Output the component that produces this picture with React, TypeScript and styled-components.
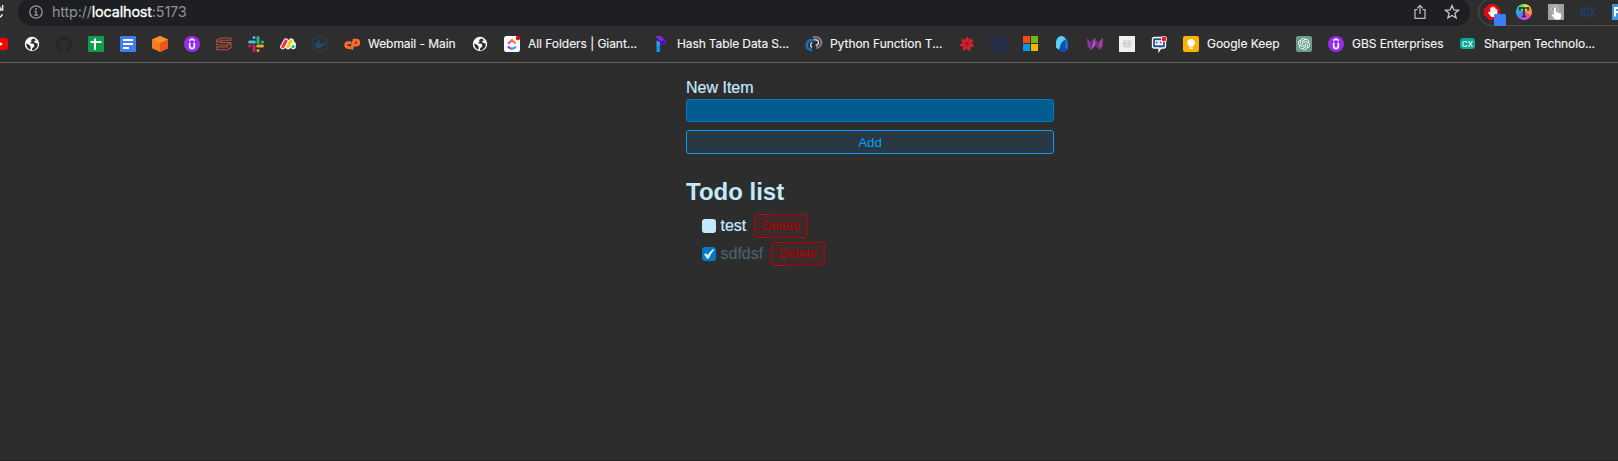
import React from "react";
import styled, { createGlobalStyle } from "styled-components";
import { SiOpenai } from "react-icons/si";
import { FaGithub, FaHandPaper } from "react-icons/fa";

const GlobalStyle = createGlobalStyle`
  * { box-sizing: border-box; }
  html, body { margin: 0; background: #2d2d2d; overflow: hidden; }
  body { font-family: "Liberation Sans", Arial, sans-serif; color: #c2eaff; }
`;

const Window = styled.div`
  width: 1618px;
  height: 461px;
  overflow: hidden;
  background: #2d2d2d;
  border-bottom: 1px solid #241f21;
`;

const Toolbar = styled.header`
  height: 26px;
  display: flex;
  background: #2e2e2f;
  overflow: hidden;
`;

const ReloadSlot = styled.div`
  width: 18px;
  flex: none;
  svg { display: block; }
`;

const AddressBar = styled.div`
  width: 1452px;
  height: 28px;
  margin-top: -2px;
  flex: none;
  display: flex;
  align-items: center;
  padding: 0 10px 0 11px;
  border-radius: 14px;
  background: #1e1f23;
  font: 14.4px Inter, Roboto, sans-serif;
  color: #919396;
`;

const Url = styled.span`
  margin: -1px 0 0 9px;
  flex: 1;
  letter-spacing: -0.16px;
  b { font-weight: 400; color: #fff; -webkit-text-stroke: 0.3px #fff; }
`;

const AddressActions = styled.div`
  display: flex;
  gap: 16px;
`;

const Extensions = styled.div`
  width: 170px;
  height: 28px;
  flex: none;
  margin: -2px 0 0 8px;
  padding: 5px 0 0 5px;
  display: flex;
  gap: 16px;
  border: 1px solid #4d4e50;
  border-radius: 14px;
  svg { flex: none; overflow: visible; }
`;

const BookmarkBar = styled.nav`
  height: 37px;
  display: flex;
  gap: 16px;
  padding-top: 10px;
  background: #2e2e2f;
  border-bottom: 1px solid #5c5c5d;
  overflow: hidden;
`;

const Bookmark = styled.a<{ $width?: number }>`
  width: ${(p) => p.$width ?? 16}px;
  height: 16px;
  flex: none;
  display: flex;
  gap: 8px;
  align-items: center;
  &:first-child { margin-left: -8px; }
  svg { flex: none; display: block; overflow: visible; }
`;

const Label = styled.span<{ $track: number }>`
  font: 12px/16px Inter, Roboto, sans-serif;
  letter-spacing: ${(p) => p.$track}px;
  white-space: nowrap;
  color: #f4f4f4;
  -webkit-text-stroke: 0.15px #f4f4f4;
`;

const Page = styled.main`
  width: 368px;
  margin-left: 686px;
  padding-top: 16px;
  display: flex;
  flex-direction: column;
`;

const ItemForm = styled.form`
  display: flex;
  flex-direction: column;
  label { height: 18px; line-height: 18px; font-size: 16px; margin-bottom: 2px; -webkit-text-stroke: 0.2px #c2eaff; }
`;

const TextField = styled.input`
  height: 23px;
  margin: 0 0 8px;
  border: 1px solid #007ac2;
  border-radius: 3px;
  background: #005c91;
  outline: none;
`;

const Button = styled.button<{ $danger?: boolean }>`
  height: 24px;
  padding: ${(p) => (p.$danger ? "0 7px" : "1px 7px 0")};
  border: 1px solid ${(p) => (p.$danger ? "#b80000" : "#0a99f5")};
  border-radius: 3px;
  background: ${(p) => (p.$danger ? "#3d282a" : "#293944")};
  color: ${(p) => (p.$danger ? "#b30000" : "#0a99f5")};
  font: 13.333px/20px "Liberation Sans", Arial, sans-serif;
`;

const Heading = styled.h1`
  margin: 24px 0 0;
  font-size: 24px;
  line-height: 28px;
`;

const List = styled.ul`
  list-style: none;
  margin: 8px 0 0;
  padding: 0 0 0 16px;
  display: flex;
  flex-direction: column;
  gap: 4px;
`;

const Todo = styled.li<{ $done?: boolean }>`
  display: flex;
  align-items: center;
  height: 24px;
  span {
    margin: 0 7.5px 0 4.5px;
    line-height: 18px;
    color: ${(p) => (p.$done ? "#4b606b" : "#c2eaff")};
    -webkit-text-stroke: 0.2px ${(p) => (p.$done ? "#4b606b" : "#c2eaff")};
  }
`;

const CheckBox = styled.div<{ $done?: boolean }>`
  width: 14px;
  height: 14px;
  border-radius: 3px;
  background: ${(p) => (p.$done ? "#007ac2" : "#c2eaff")};
  svg { display: block; }
`;

const Globe = () => (
  <svg width="16" height="16"><circle cx="8" cy="8" r="7.2" fill="#fff" /><path d="M9.5 2.3L7 4.3l.6 1.5-2 1.4 4 .6.8 2.4-2.4 2.2-.2 2.2 2.600-.6 3-3 .5-3.500-2.400-.5-1.800-1.600 2.400-1.200z" fill="#2e2e2f" /><path d="M2.200 7.200l3.600 2 1 2.200-.6 2.400q-4-2-4-6.600z" fill="#2e2e2f" /></svg>
);
const YouTube = () => (
  <svg width="16" height="16"><rect y="2" width="16" height="12" rx="3" fill="#f00" /><path d="M6.5 5.4v5.2L11 8z" fill="#fff" /></svg>
);
const Sheets = () => (
  <svg width="16" height="16"><rect width="16" height="16" rx="1" fill="#0f9d4c" /><path d="M2.5 6h11M7 2.5v11.5" stroke="#fff" strokeWidth="2" /></svg>
);
const Docs = () => (
  <svg width="16" height="16"><rect width="16" height="16" rx="1" fill="#3f7df3" /><path d="M3 4h10M3 8h10M3 12h6" stroke="#fff" strokeWidth="1.8" /></svg>
);
const Cube = () => (
  <svg width="16" height="16"><path d="M8 0l8 3.5v8.8L8 16l-8-3.7V3.5z" fill="#f47b20" /><path d="M0 3.5L8 0l8 3.5L8 7z" fill="#ff9226" /><path d="M8 7l8-3.5v8.8L8 16z" fill="#e9581b" /></svg>
);
const Udemy = () => (
  <svg width="16" height="16"><circle cx="8" cy="8" r="8" fill="#962cf0" /><path d="M5.2 4.6L8 3l2.8 1.6M5.7 6.5v3.7a2.3 2.3 0 004.6 0V6.5" fill="none" stroke="#fff" strokeWidth="1.6" /></svg>
);
const SqlKnot = () => (
  <svg width="16" height="16" fill="none" stroke="#b4503d" strokeWidth="1.1"><path d="M15 2H4.500L.8 4v5H11.500v2H.8v2.800H12l3-2.300V6.500H4.800V4.300H15zM.8 4.500L4.800 6.500M11.500 9L15 6.500" /></svg>
);
const Slack = () => (
  <svg width="16" height="16" strokeWidth="3" strokeLinecap="round">
    <path d="M1.6 6h4.8M6 1.5v.1" stroke="#36c5f0" /><path d="M10 1.6v4.8M14.4 6h.1" stroke="#2eb67d" />
    <path d="M9.7 10h4.8M10 14.4v.1" stroke="#e0a92c" /><path d="M6 9.7v4.8M1.6 10h.1" stroke="#d41c58" />
  </svg>
);
const Monday = () => (
  <svg width="16" height="16" strokeLinecap="round"><path d="M2.8 10.8L6 5M8 10.8L11.3 5M13.2 10.6V8" stroke="#fff" strokeWidth="5.2" /><path d="M2.8 10.8L6 5" stroke="#f62b54" strokeWidth="3.2" /><path d="M7.8 10.8L11 5" stroke="#fc0" strokeWidth="3.2" /><circle cx="13.1" cy="10.6" r="1.7" fill="#00ca72" /></svg>
);
const WhaleRound = () => (
  <svg width="16" height="16"><circle cx="8" cy="8" r="7.4" fill="none" stroke="#21435a" strokeWidth="1.1" /><path d="M2.8 8h7.700q.8-1 .3-2.500 1.200.5 1.400 1.700h1.500q-.6 1.500-2.200 1.500Q10 12 6.600 12q-3.600 0-3.800-4zM4 6h4.500v1.500H4zM6.500 4.200H8v1.500H6.500z" fill="#214f70" /></svg>
);
const CPanel = () => (
  <svg width="16" height="16" fill="none" stroke="#ff6c2c" strokeWidth="3"><path d="M7.300 6.700H4.400a2.400 2.400 0 00-.3 4.800h2.500" /><path d="M7.600 13.500L10 4.200h2.300a2.300 2.300 0 010 4.800H10" /></svg>
);
const ClickUp = () => (
  <svg width="16" height="16" fill="none" strokeWidth="2.2">
    <defs>
      <linearGradient id="cuTop"><stop stopColor="#ff35bc" /><stop offset="1" stopColor="#ff9a00" /></linearGradient>
      <linearGradient id="cuLow"><stop stopColor="#7b40f6" /><stop offset="1" stopColor="#29b5ff" /></linearGradient>
    </defs>
    <rect width="16" height="16" rx="2.5" fill="#fff" /><path d="M4.2 7.6L8 4.2l3.8 3.4" stroke="url(#cuTop)" /><path d="M4 10.4q4 4.4 8 0" stroke="url(#cuLow)" /><circle cx="14" cy="2" r="2.2" fill="#e00000" />
  </svg>
);
const Programiz = () => (
  <svg width="16" height="16"><path d="M3 0h4.5l5.2 4.5-1 3.5L3 1.6z" fill="#8422ee" /><path d="M3.5 6.5L11 4l1.5 1.5L9 9.3 3.5 11.5z" fill="#5a00dd" /><path d="M3.5 4.5L7 6v4l-3.500 2z" fill="#15a9df" /><path d="M3.5 12L7 10.5V16H3.500z" fill="#059cf2" /></svg>
);
const PythonRings = () => (
  <svg width="16" height="16" fill="none"><path d="M7 1.2h3a4.8 4.8 0 010 10.6" stroke="#77787b" strokeWidth="2.4" /><path d="M8 3.8h1.7a2.5 2.5 0 010 5.6" stroke="#e2e2e2" strokeWidth="1.3" /><path d="M8 4.2H6a4.800 4.800 0 00-1 9.600l1 1" stroke="#176eb3" strokeWidth="2.8" /><path d="M6 6.5a3 3 0 000 5" stroke="#f1f1f1" strokeWidth="1.2" /></svg>
);
const RedBurst = () => (
  <svg width="16" height="16"><g fill="#dc202c">{[0, 51, 103, 154, 206, 257, 309].map((a) => (<path key={a} transform={`rotate(${a} 8 8)`} d="M8 8L5.6 4 8.500.3 10.200 3.600z" />))}</g><g stroke="#6d2026" strokeWidth=".5">{[0, 51, 103, 154, 206, 257, 309].map((a) => (<path key={a} transform={`rotate(${a} 8 8)`} d="M8 8L10.200 3.600" />))}</g></svg>
);
const HSquare = () => (
  <svg width="16" height="16"><rect width="16" height="16" fill="#262c48" /><path d="M5 3v10M5 8.5q5-4 5.500.5v4" fill="none" stroke="#20304f" strokeWidth="2" /></svg>
);
const Microsoft = () => (
  <svg width="16" height="16"><path d="M0 0h7v7H0z" fill="#f8491c" /><path d="M8 0h7v7H8z" fill="#75b800" /><path d="M0 8h7v7H0z" fill="#0099ec" /><path d="M8 8h7v7H8z" fill="#ffb500" /></svg>
);
const BlueFold = () => (
  <svg width="16" height="16"><path d="M1 11.5V6q1-5.500 5.500-6Q12 .5 13 7v6l-3 2.500H7z" fill="#1675cf" /><path d="M1 11.500V6q1-5.500 5.500-6Q10 .5 10.500 3.500 6 5 5.500 12L3.500 13.500z" fill="#5bd0f7" /><path d="M3.500 14.500Q5 12 5.500 9q1-4 5-4.500L10 12l3 1-3 2.700H6z" fill="#0d51ad" /></svg>
);
const VisualW = () => (
  <svg width="16" height="16"><path d="M0 2l4.500 6L4 14 .8 10.500z" fill="#8b3b92" /><path d="M4 14L3.200 5.500 7.500 2 8 10z" fill="#6b2c78" /><path d="M4 14L7.500 2 10 6.500 8 9.500z" fill="#b05ab1" /><path d="M7.500 2l4 5L12.500 14 8.600 10.500z" fill="#753180" /><path d="M16 1.500L11.500 6.500 12.500 14l3-4z" fill="#9a449d" /></svg>
);
const PaleTile = () => (
  <svg width="16" height="16"><rect width="16" height="16" fill="#f0f0f0" /><path d="M5 4h6l2 3-1 3-2 2H6l-2-2-1-3z" fill="#dfdfdf" /><path d="M5.500 4v7M10.500 4v7M3.500 7h9M5 10h6" stroke="#c9c9c9" strokeWidth=".8" /></svg>
);
const ChatBot = () => (
  <svg width="16" height="16"><path d="M3 1.500h10q1.500 0 1.500 1.500v7.500q0 1.500-1.500 1.500h-3L8 15V12H3q-1.500 0-1.500-1.500V3q0-1.500 1.500-1.500z" fill="#1659a4" stroke="#fff" strokeWidth="1.3" /><path d="M4 4.200h8v5H4z" fill="#fff" /><circle cx="5.700" cy="6.500" r="1" fill="#d21e2b" /><circle cx="9.500" cy="6.500" r="1" fill="#d21e2b" /><circle cx="13" cy="3" r="3" fill="#fff" /><circle cx="13" cy="3" r="2.400" fill="#f5152b" /></svg>
);
const Keep = () => (
  <svg width="16" height="16"><rect width="16" height="16" rx="2" fill="#ffb300" /><circle cx="8" cy="6.800" r="3.800" fill="#fff" /><path d="M6 9h4v1.600H6zM6 11.500h4v1.300H6z" fill="#fff" /></svg>
);
const ChatGpt = () => (
  <svg width="16" height="16"><rect width="16" height="16" rx="2" fill="#6a9d8d" /><SiOpenai x="2" y="2" size={12} color="#fff" /></svg>
);
const Cx = () => (
  <svg width="16" height="16"><rect y="2" width="15" height="11" rx="3" fill="#07a99b" /><text x="7.500" y="10.500" textAnchor="middle" fontFamily="Inter" fontSize="8" fontWeight="500" fill="#fff">CX</text></svg>
);

const bookmarks: { icon: React.ReactNode; text?: string; width?: number; track?: number }[] = [
  { icon: <YouTube /> },
  { icon: <Globe /> },
  { icon: <FaGithub size={16} color="#22272d" /> },
  { icon: <Sheets /> },
  { icon: <Docs /> },
  { icon: <Cube /> },
  { icon: <Udemy /> },
  { icon: <SqlKnot /> },
  { icon: <Slack /> },
  { icon: <Monday /> },
  { icon: <WhaleRound /> },
  { icon: <CPanel />, text: "Webmail - Main", width: 112, track: -0.06 },
  { icon: <Globe /> },
  { icon: <ClickUp />, text: "All Folders | Giant...", width: 133, track: -0.05 },
  { icon: <Programiz />, text: "Hash Table Data S...", width: 137, track: -0.12 },
  { icon: <PythonRings />, text: "Python Function T...", width: 137, track: -0.04 },
  { icon: <RedBurst /> },
  { icon: <HSquare /> },
  { icon: <Microsoft /> },
  { icon: <BlueFold /> },
  { icon: <VisualW /> },
  { icon: <PaleTile /> },
  { icon: <ChatBot /> },
  { icon: <Keep />, text: "Google Keep", width: 97, track: -0.04 },
  { icon: <ChatGpt /> },
  { icon: <Udemy />, text: "GBS Enterprises", width: 116, track: -0.05 },
  { icon: <Cx />, text: "Sharpen Technolo...", width: 140, track: -0.14 },
];

export default function App() {
  return (
    <Window>
      <GlobalStyle />
      <Toolbar>
        <ReloadSlot>
          <svg width="18" height="26"><path d="M-1 7l2.200 1.800M2.600 5v5H-2M-1 17.300q2.400-.5 3.400-3" fill="none" stroke="#eee" strokeWidth="1.500" /></svg>
        </ReloadSlot>
        <AddressBar>
          <svg width="14" height="14" fill="none" stroke="#9a9da1" strokeWidth="1.300"><circle cx="7" cy="7" r="6.200" /><path d="M5.500 6.300h1.700v3.800M5.200 10.200h4" /><path d="M6.200 3.900h1.600" strokeWidth="1.600" /></svg>
          <Url>http://<b>localhost</b>:5173</Url>
          <AddressActions>
            <svg width="16" height="16" fill="none" stroke="#b5b6b8" strokeWidth="1.300"><path d="M5.500 5.700H3v8.600h10V5.700h-2.500M8 10V1.500M5.200 4.200L8 1.400l2.800 2.800" /></svg>
            <svg width="16" height="16" fill="none" stroke="#c5c6c8" strokeWidth="1.300"><path d="M8 1.600l1.800 4.300 4.700.4-3.600 3 1.200 4.600L8 11.400l-4.100 2.500 1.200-4.600-3.600-3 4.700-.4z" /></svg>
          </AddressActions>
        </AddressBar>
        <Extensions>
          <svg width="16" height="16"><path d="M5 0h6l5 5v6l-5 5H5l-5-5V5z" fill="#de0b12" /><FaHandPaper x="3.500" y="2.500" size={10.5} color="#fff" /><rect x="10" y="10" width="12" height="12" rx="1.500" fill="#3f7df5" /></svg>
          <svg width="16" height="16">
            <path d="M8 8V0a8 8 0 016.900 4z" fill="#ffd43b" /><path d="M8 8l6.900-4a8 8 0 010 8z" fill="#ff9140" /><path d="M8 8l6.900 4A8 8 0 018 16z" fill="#e849c9" /><path d="M8 8v8a8 8 0 01-6.900-4z" fill="#8f61f4" /><path d="M8 8l-6.900 4a8 8 0 010-8z" fill="#25aee8" /><path d="M8 8L1.100 4A8 8 0 018 0z" fill="#65d86b" />
            <path d="M3.500 4h9M8 4v8.500M6 12.500h4M3.800 3v3.500M12.200 3v3.500" stroke="#26303b" strokeWidth="1.700" />
          </svg>
          <svg width="16" height="16"><rect width="16" height="16" fill="#a1a1a1" /><circle cx="7" cy="5" r="3.600" fill="none" stroke="#c4c4c4" /><path d="M6 4q1.200-1.600 2 0v4l5 1.500q1 3-1 6H7L3.500 11l1-1.200L6 11z" fill="#fff" /></svg>
          <svg width="16" height="16" fill="none" stroke="#203c67" strokeWidth="1.500"><path d="M0 4.200h4.500v3.500H1.500v4H5V8M1.500 4v8M6 4.200h4M8 4v8M6 11.800h4M11.500 4v8M15.500 4l-3.500 4 3.500 4" /></svg>
          <svg width="16" height="16"><rect width="16" height="16" fill="#4097e0" /><path d="M3 12.500V4h5M3 8h4" fill="none" stroke="#fff" strokeWidth="1.800" /></svg>
        </Extensions>
      </Toolbar>
      <BookmarkBar>
        {bookmarks.map((b, i) => (
          <Bookmark key={i} $width={b.width}>
            {b.icon}
            {b.text && <Label $track={b.track ?? 0}>{b.text}</Label>}
          </Bookmark>
        ))}
      </BookmarkBar>
      <Page>
        <ItemForm onSubmit={(e) => e.preventDefault()}>
          <label htmlFor="item">New Item</label>
          <TextField id="item" type="text" />
          <Button>Add</Button>
        </ItemForm>
        <Heading>Todo list</Heading>
        <List>
          <Todo>
            <CheckBox />
            <span>test</span>
            <Button $danger>Delete</Button>
          </Todo>
          <Todo $done>
            <CheckBox $done>
              <svg width="14" height="14"><path d="M2 7.200l2.300-.9 1.400 1.800Q7.700 4.500 10.800 2.200l1.700.3Q9 6.500 6.800 11.400L5 11.700z" fill="#d8f2ff" /></svg>
            </CheckBox>
            <span>sdfdsf</span>
            <Button $danger>Delete</Button>
          </Todo>
        </List>
      </Page>
    </Window>
  );
}
